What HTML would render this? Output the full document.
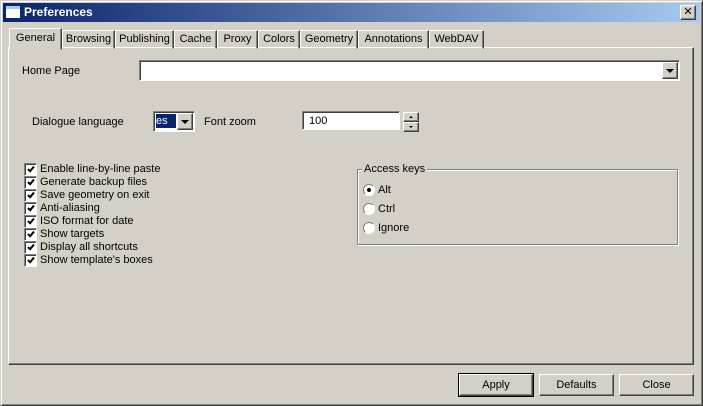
<html><head><style>
body{margin:0;width:703px;height:406px;background:#d4d0c8;font-family:"Liberation Sans","DejaVu Sans",sans-serif;font-size:11px;position:relative;overflow:hidden}
.a{position:absolute}
.o{position:absolute;border:1px solid;border-color:#fff #404040 #404040 #fff;box-shadow:inset -1px -1px #808080}
.s{position:absolute;background:#fff;border:1px solid;border-color:#808080 #fff #fff #808080;box-shadow:inset 1px 1px #404040}
.tab{position:absolute;top:30px;height:17px;border:1px solid;border-color:#fff #404040 transparent #fff;box-shadow:inset -1px 0 #808080;text-align:center;line-height:17px;font-size:11px}
.cb{position:absolute;left:24px;width:11px;height:11px;background:#fff;border:1px solid;border-color:#808080 #fff #fff #808080;box-shadow:inset 1px 1px #404040}
.cb:after{content:"";position:absolute;left:4px;top:1px;width:2px;height:5px;border:solid #000;border-width:0 2px 2px 0;transform:rotate(40deg)}
.cl{position:absolute;left:40px}
.rd{position:absolute;left:363px;width:10px;height:10px;border-radius:50%;background:#fff;border:1px solid;border-color:#808080 #fff #fff #808080}
.btn{position:absolute;top:374px;height:20px;text-align:center;line-height:20px}
.arr{width:0;height:0;border-left:4px solid transparent;border-right:4px solid transparent;border-top:4px solid #000;position:absolute}
.up{width:0;height:0;border-left:2px solid transparent;border-right:2px solid transparent;border-bottom:2px solid #000;position:absolute;left:5px;top:3px}
.dn{width:0;height:0;border-left:2px solid transparent;border-right:2px solid transparent;border-top:2px solid #000;position:absolute;left:5px;top:3px}
</style></head><body>
<div class="a" style="left:0;top:0;width:701px;height:404px;border:1px solid;border-color:#d4d0c8 #404040 #404040 #d4d0c8;box-shadow:inset 1px 1px #fff,inset -1px -1px #808080"></div>
<div class="a" style="left:3px;top:3px;width:697px;height:19px;background:linear-gradient(90deg,#0a246a,#a6caf0)"></div>
<div class="a" style="left:6px;top:6px;width:14px;height:12px;background:#fff;border-top:3px solid #a6caf0;box-sizing:border-box"></div>
<div class="a" style="left:24px;top:5px;color:#fff;font-weight:bold;font-size:12px">Preferences</div>
<div class="o" style="left:680px;top:5px;width:14px;height:13px;background:#d4d0c8;text-align:center;line-height:13px;font-weight:bold;font-size:11px">✕</div>
<div class="o" style="left:8px;top:47px;width:684px;height:316px;border-top-color:#fff"></div>
<div class="tab" style="left:62px;width:51px">Browsing</div>
<div class="tab" style="left:115px;width:57px">Publishing</div>
<div class="tab" style="left:174px;width:41px">Cache</div>
<div class="tab" style="left:217px;width:39px">Proxy</div>
<div class="tab" style="left:258px;width:40px">Colors</div>
<div class="tab" style="left:300px;width:56px">Geometry</div>
<div class="tab" style="left:358px;width:69px">Annotations</div>
<div class="tab" style="left:429px;width:53px">WebDAV</div>
<div class="tab" style="left:9px;top:28px;height:20px;width:51px;background:#d4d0c8;line-height:18px">General</div>
<div class="a" style="left:22px;top:65px">Home Page</div>
<div class="s" style="left:139px;top:60px;width:539px;height:19px"></div>
<div class="o" style="left:662px;top:62px;width:14px;height:15px;background:#d4d0c8"><div class="arr" style="left:3px;top:6px"></div></div>
<div class="a" style="left:32px;top:116px">Dialogue language</div>
<div class="s" style="left:153px;top:111px;width:40px;height:19px"></div>
<div class="a" style="left:156px;top:114px;width:20px;height:14px;background:#0a246a;color:#fff;line-height:14px">es</div>
<div class="o" style="left:177px;top:113px;width:14px;height:15px;background:#d4d0c8"><div class="arr" style="left:3px;top:6px"></div></div>
<div class="a" style="left:204px;top:116px">Font zoom</div>
<div class="s" style="left:302px;top:111px;width:98px;height:19px;padding-left:6px;box-sizing:border-box;line-height:19px">100</div>
<div class="o" style="left:403px;top:112px;width:14px;height:8px;background:#d4d0c8"><div class="up"></div></div>
<div class="o" style="left:403px;top:122px;width:14px;height:8px;background:#d4d0c8"><div class="dn"></div></div>
<div class="cb" style="top:163px"></div><div class="cl" style="top:163px">Enable line-by-line paste</div>
<div class="cb" style="top:176px"></div><div class="cl" style="top:176px">Generate backup files</div>
<div class="cb" style="top:189px"></div><div class="cl" style="top:189px">Save geometry on exit</div>
<div class="cb" style="top:202px"></div><div class="cl" style="top:202px">Anti-aliasing</div>
<div class="cb" style="top:215px"></div><div class="cl" style="top:215px">ISO format for date</div>
<div class="cb" style="top:228px"></div><div class="cl" style="top:228px">Show targets</div>
<div class="cb" style="top:241px"></div><div class="cl" style="top:241px">Display all shortcuts</div>
<div class="cb" style="top:254px"></div><div class="cl" style="top:254px">Show template's boxes</div>
<div class="a" style="left:357px;top:169px;width:319px;height:74px;border:1px solid #808080;box-shadow:1px 1px #fff,inset 1px 1px #fff"></div>
<div class="a" style="left:362px;top:163px;background:#d4d0c8;padding:0 2px">Access keys</div>
<div class="rd" style="top:184px"><div class="a" style="left:3px;top:3px;width:4px;height:4px;background:#000;border-radius:50%"></div></div><div class="a" style="left:378px;top:184px">Alt</div>
<div class="rd" style="top:203px"></div><div class="a" style="left:378px;top:203px">Ctrl</div>
<div class="rd" style="top:222px"></div><div class="a" style="left:378px;top:222px">Ignore</div>
<div class="o btn" style="left:459px;width:72px;outline:1px solid #000">Apply</div>
<div class="o btn" style="left:539px;width:73px">Defaults</div>
<div class="o btn" style="left:619px;width:73px">Close</div>
</body></html>
